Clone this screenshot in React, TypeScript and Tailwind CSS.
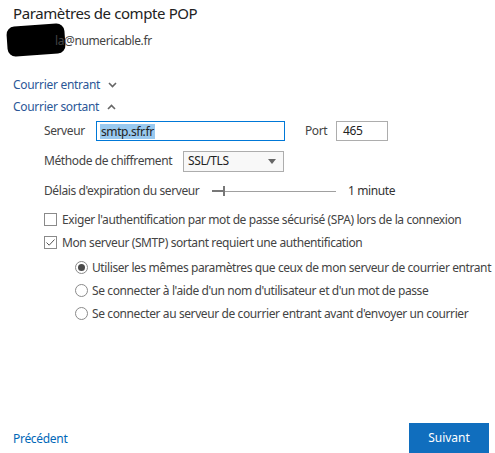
import React from "react";

const font = { fontFamily: '"Noto Sans", "Open Sans", sans-serif' };

function ChevronDown() {
  return (
    <svg width="9" height="6" viewBox="0 0 9 6" className="ml-[8px]">
      <path d="M1 1 L4.5 4.5 L8 1" fill="none" stroke="#666" strokeWidth="1.6" />
    </svg>
  );
}
function ChevronUp() {
  return (
    <svg width="9" height="6" viewBox="0 0 9 6" className="ml-[8px]">
      <path d="M1 5 L4.5 1.5 L8 5" fill="none" stroke="#666" strokeWidth="1.6" />
    </svg>
  );
}

function Checkbox({ checked }: { checked?: boolean }) {
  return (
    <div className="w-[13px] h-[13px] border border-[#8a8a8a] bg-white flex items-center justify-center shrink-0">
      {checked && (
        <svg width="11" height="11" viewBox="0 0 11 11">
          <path d="M1.5 5.5 L4.2 8.2 L9.5 2.5" fill="none" stroke="#555" strokeWidth="1" />
        </svg>
      )}
    </div>
  );
}

function Radio({ checked }: { checked?: boolean }) {
  return (
    <div className="w-[13px] h-[13px] rounded-full border border-[#8a8a8a] bg-white flex items-center justify-center shrink-0">
      {checked && <div className="w-[7px] h-[7px] rounded-full bg-[#4a4a4a]" />}
    </div>
  );
}

export default function App() {
  return (
    <div className="w-[495px] h-[453px] bg-white text-[#333] relative overflow-hidden flex flex-col" style={font}>
      <div className="pl-[13px] pt-[2px] h-[26px] text-[15px] leading-[22px] text-[#222] tracking-[-0.4px] whitespace-nowrap">
        Paramètres de compte POP
      </div>
      <div className="relative h-[30px] pl-[13px]">
        <div className="absolute left-[7px] top-[-1px] w-[58px] h-[30px] bg-black rounded-[8px] rotate-[-4deg]" />
        <div className="absolute left-[55px] top-[7px] text-[12px] leading-[16px] text-[#444] tracking-[-0.4px] whitespace-nowrap">
          la@numericable.fr
        </div>
      </div>
      <div className="h-[18px]" />
      <div className="pl-[13px] h-[22px] flex items-center text-[12px] text-[#2b5797] tracking-[-0.3px] whitespace-nowrap">
        Courrier entrant <ChevronDown />
      </div>
      <div className="pl-[13px] h-[22px] flex items-center text-[12px] text-[#2b5797] tracking-[-0.3px] whitespace-nowrap">
        Courrier sortant <ChevronUp />
      </div>
      <div className="pl-[44px] text-[12px] text-[#444] tracking-[-0.4px] flex flex-col whitespace-nowrap">
        <div className="h-[22px] mt-[2px] flex items-center">
          <span className="w-[52px]">Serveur</span>
          <div className="w-[189px] h-[20px] border border-[#0078d7] flex items-center pl-[3px]">
            <span className="bg-[#99c9ef] text-[#222] leading-[15px] px-[1px]">smtp.sfr.fr</span>
          </div>
          <span className="ml-[20px] w-[31px]">Port</span>
          <div className="w-[52px] h-[20px] border border-[#adadad] flex items-center pl-[6px] text-[#222]">465</div>
        </div>
        <div className="h-[22px] mt-[8px] flex items-center">
          <span className="w-[139px]">Méthode de chiffrement</span>
          <div className="w-[101px] h-[21px] border border-[#adadad] bg-[#f8f8f8] flex items-center justify-between pl-[4px] pr-[7px] text-[#222]">
            SSL/TLS
            <svg width="8" height="5" viewBox="0 0 8 5"><path d="M0 0 L8 0 L4 5 Z" fill="#666" /></svg>
          </div>
        </div>
        <div className="h-[20px] mt-[9px] flex items-center">
          <span className="w-[168px]">Délais d'expiration du serveur</span>
          <div className="relative w-[124px] h-[12px]">
            <div className="absolute left-0 top-[5px] w-[12px] h-[2px] bg-[#777]" />
            <div className="absolute left-[12px] top-[5.5px] w-[112px] h-[1px] bg-[#a0a0a0]" />
            <div className="absolute left-[11px] top-[1px] w-[2px] h-[10px] bg-[#777]" />
          </div>
          <span className="ml-[12px] text-[#333]">1 minute</span>
        </div>
        <div className="h-[23px] mt-[7px] flex items-center">
          <Checkbox />
          <span className="ml-[5px]">Exiger l'authentification par mot de passe sécurisé (SPA) lors de la connexion</span>
        </div>
        <div className="h-[23px] flex items-center">
          <Checkbox checked />
          <span className="ml-[5px]">Mon serveur (SMTP) sortant requiert une authentification</span>
        </div>
        <div className="pl-[31px] flex flex-col pt-[2px]">
          <div className="h-[23px] flex items-center">
            <Radio checked />
            <span className="ml-[4px]">Utiliser les mêmes paramètres que ceux de mon serveur de courrier entrant</span>
          </div>
          <div className="h-[23px] flex items-center">
            <Radio />
            <span className="ml-[4px]">Se connecter à l'aide d'un nom d'utilisateur et d'un mot de passe</span>
          </div>
          <div className="h-[23px] flex items-center">
            <Radio />
            <span className="ml-[4px]">Se connecter au serveur de courrier entrant avant d'envoyer un courrier</span>
          </div>
        </div>
      </div>
      <div className="flex-1" />
      <div className="flex items-end justify-between pl-[13px] pr-[6px] h-[31px]">
        <span className="text-[12px] text-[#0067b8] mb-[5px] tracking-[-0.3px]">Précédent</span>
        <div className="w-[80px] h-[30px] bg-[#106ebe] text-white text-[12px] flex items-center justify-center">Suivant</div>
      </div>
    </div>
  );
}
